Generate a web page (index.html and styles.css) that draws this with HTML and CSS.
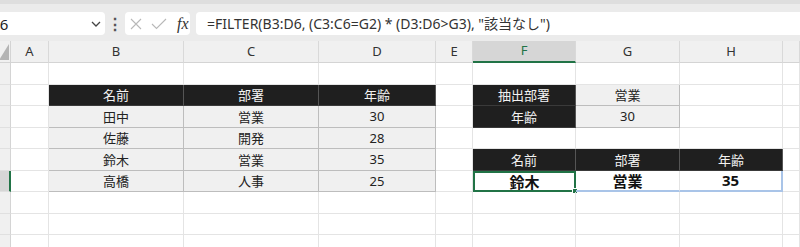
FILE: index.html
```html
<!DOCTYPE html>
<html lang="ja">
<head>
    <meta charset="UTF-8">
    <title>FILTER</title>
    <link rel="stylesheet" href="styles.css">
</head>
<body>

<div class="barre">
    <div class="nom">F6<span class="chevron">
        <svg width="10" height="6" viewBox="0 0 10 6"><path d="M1 1 L5 5 L9 1" fill="none" stroke="#444" stroke-width="1.3"/></svg>
    </span></div>
    <div class="points">⋮</div>
    <div class="fonctions">
        <svg width="12" height="12" viewBox="0 0 12 12"><path d="M1 1 L11 11 M11 1 L1 11" stroke="#b8b8b8" stroke-width="1.1"/></svg>
        <svg width="16" height="12" viewBox="0 0 16 12"><path d="M1 6 L5.5 10.5 L15 1" fill="none" stroke="#b8b8b8" stroke-width="1.1"/></svg>
        <span class="fx">fx</span>
    </div>
    <div class="formule">=FILTER(B3:D6, (C3:C6=G2) * (D3:D6&gt;G3), "該当なし")</div>
</div>

<div class="feuille">
    <div class="coin"></div>
    <div class="entete">A</div>
    <div class="entete">B</div>
    <div class="entete">C</div>
    <div class="entete">D</div>
    <div class="entete">E</div>
    <div class="entete actif">F</div>
    <div class="entete">G</div>
    <div class="entete">H</div>
    <div class="entete"></div>

    <!-- ligne 1 -->
    <div class="num"></div>
    <div class="c"></div><div class="c"></div><div class="c"></div><div class="c"></div>
    <div class="c"></div><div class="c"></div><div class="c"></div><div class="c"></div><div class="c"></div>

    <!-- ligne 2 -->
    <div class="num"></div>
    <div class="c"></div>
    <div class="c titre">名前</div>
    <div class="c titre">部署</div>
    <div class="c titre">年齢</div>
    <div class="c"></div>
    <div class="c titre">抽出部署</div>
    <div class="c donnee">営業</div>
    <div class="c"></div><div class="c"></div>

    <!-- ligne 3 -->
    <div class="num"></div>
    <div class="c"></div>
    <div class="c donnee">田中</div>
    <div class="c donnee">営業</div>
    <div class="c donnee">30</div>
    <div class="c"></div>
    <div class="c titre">年齢</div>
    <div class="c donnee">30</div>
    <div class="c"></div><div class="c"></div>

    <!-- ligne 4 -->
    <div class="num"></div>
    <div class="c"></div>
    <div class="c donnee">佐藤</div>
    <div class="c donnee">開発</div>
    <div class="c donnee">28</div>
    <div class="c"></div><div class="c"></div><div class="c"></div><div class="c"></div><div class="c"></div>

    <!-- ligne 5 -->
    <div class="num"></div>
    <div class="c"></div>
    <div class="c donnee">鈴木</div>
    <div class="c donnee">営業</div>
    <div class="c donnee">35</div>
    <div class="c"></div>
    <div class="c titre">名前</div>
    <div class="c titre">部署</div>
    <div class="c titre">年齢</div>
    <div class="c"></div>

    <!-- ligne 6 -->
    <div class="num actif"></div>
    <div class="c"></div>
    <div class="c donnee">高橋</div>
    <div class="c donnee">人事</div>
    <div class="c donnee">25</div>
    <div class="c"></div>
    <div class="c resultat selection">鈴木<span class="poignee"></span></div>
    <div class="c resultat debord">営業</div>
    <div class="c resultat debord fin">35</div>
    <div class="c"></div>

    <!-- lignes 7 a 9 -->
    <div class="num"></div>
    <div class="c"></div><div class="c"></div><div class="c"></div><div class="c"></div>
    <div class="c"></div><div class="c"></div><div class="c"></div><div class="c"></div><div class="c"></div>
    <div class="num"></div>
    <div class="c"></div><div class="c"></div><div class="c"></div><div class="c"></div>
    <div class="c"></div><div class="c"></div><div class="c"></div><div class="c"></div><div class="c"></div>
    <div class="num"></div>
    <div class="c"></div><div class="c"></div><div class="c"></div><div class="c"></div>
    <div class="c"></div><div class="c"></div><div class="c"></div><div class="c"></div><div class="c"></div>
</div>

</body>
</html>
```

FILE: styles.css
```css
* {
    box-sizing: border-box;
}

body {
    margin: 0;
    background: #ffffff;
    font-family: "Noto Sans", "Noto Sans CJK JP", sans-serif;
    overflow: hidden;
}

.barre {
    height: 41px;
    background: #ebebeb;
    border-top: 4px solid #dedede;
    display: flex;
    align-items: center;
    padding-top: 2px;
}

.nom {
    width: 121px;
    height: 23px;
    margin-left: -16px;
    background: #fff;
    border-radius: 4px;
    display: flex;
    align-items: center;
    padding-left: 8px;
    font-size: 15px;
    color: #222;
}

.chevron {
    margin-left: auto;
    margin-right: 4px;
    display: flex;
}

.points {
    width: 20px;
    text-align: center;
    font-size: 16px;
    font-weight: bold;
    color: #555;
}

.fonctions {
    width: 65px;
    height: 23px;
    background: #fff;
    border-radius: 4px;
    display: flex;
    align-items: center;
    padding-left: 5px;
    gap: 9px;
}

.fx {
    font-family: "Liberation Serif", serif;
    font-style: italic;
    font-size: 16px;
    color: #333;
    margin-left: 1px;
}

.formule {
    flex: 1;
    height: 23px;
    margin-left: 6px;
    background: #fff;
    border-radius: 4px 0 0 4px;
    padding-left: 11px;
    font-size: 14px;
    line-height: 24px;
    color: #333;
    white-space: nowrap;
}

.feuille {
    display: grid;
    grid-template-columns: 11px 38px 135px 135px 117px 37px 103px 104px 103px 1fr;
    grid-template-rows: 22px repeat(9, 21.5px);
    font-size: 13px;
    color: #222;
}

.coin {
    background: #f0f0f0;
    border-right: 1px solid #d4d4d4;
    border-bottom: 1px solid #d4d4d4;
    position: relative;
}

.coin::after {
    content: "";
    position: absolute;
    right: 1px;
    bottom: 2px;
    border-left: 10px solid transparent;
    border-bottom: 16px solid #b4b4b4;
}

.entete {
    background: #f0f0f0;
    border-right: 1px solid #d9d9d9;
    border-bottom: 1px solid #d4d4d4;
    display: flex;
    align-items: center;
    justify-content: center;
    color: #333;
    padding-bottom: 2px;
}

.entete.actif {
    background: #d6d6d6;
    color: #217346;
    border-bottom: 2px solid #217346;
}

.num {
    background: #f0f0f0;
    border-right: 1px solid #d4d4d4;
    border-bottom: 1px solid #e0e0e0;
}

.num.actif {
    background: #d6d6d6;
    border-right: 2px solid #217346;
}

.c {
    border-right: 1px solid #e4e4e4;
    border-bottom: 1px solid #e4e4e4;
    display: flex;
    align-items: center;
    justify-content: center;
    position: relative;
}

.titre {
    background: #1f1f1f;
    color: #f2f2f2;
    border-right: 1px solid #555;
    border-bottom: 1px solid #3a3a3a;
}

.donnee {
    background: #f0f0f0;
    border-right: 1px solid #bdbdbd;
    border-bottom: 1px solid #bdbdbd;
}

.resultat {
    font-weight: bold;
    font-size: 15px;
    color: #111;
}

.selection {
    border: 2px solid #217346;
}

.poignee {
    position: absolute;
    right: -4px;
    bottom: -4px;
    width: 6px;
    height: 6px;
    background: #217346;
    border: 1px solid #fff;
}

.debord {
    border-bottom: 2px solid #a9c4e8;
    border-right: 1px solid #e4e4e4;
}

.debord.fin {
    border-right: 2px solid #a9c4e8;
}
```
